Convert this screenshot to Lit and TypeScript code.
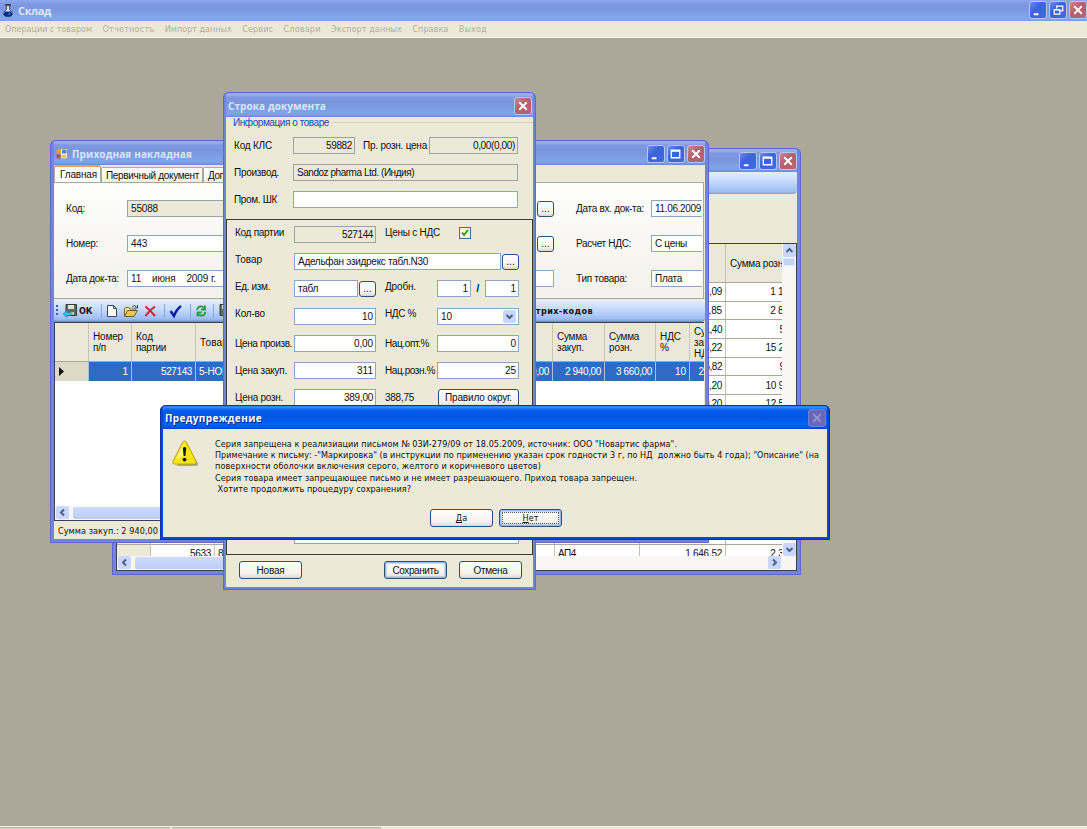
import { css, html, LitElement, svg } from "lit";
import { customElement, property } from "lit/decorators.js";
import { classMap } from "lit/directives/class-map.js";

/** A run of text whose tracking is adjusted so that it fills a given width. */
@customElement("xp-text")
export class XpText extends LitElement {
  static styles = css`
    :host {
      display: inline-block;
      white-space: pre;
      flex: none;
    }
  `;

  @property() text = "";
  @property({ type: Number }) w = 0;

  protected override render() {
    return html`<span>${this.text}</span>`;
  }

  protected override updated(): void {
    const span = this.renderRoot.querySelector("span");
    if (!span || !this.w || !this.text) {
      return;
    }
    span.style.letterSpacing = "0";
    const natural = span.getBoundingClientRect().width;
    span.style.letterSpacing = `${(this.w - natural) / this.text.length}px`;
  }
}

const t = (text: string, w = 0) => html`<xp-text .text=${text} .w=${w}></xp-text>`;

const amount = (text: string) => t(text, text.length * 4.6);

type Caption = "min" | "max" | "restore" | "close";

const captionGlyphs = {
  min: svg`<path d="M4 12h5v2H4z" fill="#fff" />`,
  max: svg`<path d="M3.500 4.500h9v8h-9z M3 5.500h10" fill="none" stroke="#fff" stroke-width="1.400" />`,
  restore: svg`<path d="M7 7V4.500h6.500v5H11 M4.500 8h6v5h-6z M4 8.500h7" fill="none" stroke="#fff" stroke-width="1.300" />`,
  close: svg`<path d="M4.500 4.500l8 8M12.500 4.500l-8 8" fill="none" stroke="#fff" stroke-width="2" />`
};

@customElement("xp-window")
export class XpWindow extends LitElement {
  static styles = css`
    :host {
      box-sizing: border-box;
      display: flex;
      flex-direction: column;
      background: #ece9d8;
      border: solid #7384dc;
      border-width: 0 var(--edge, 4px) var(--edge, 4px);
      border-radius: 6px 6px 0 0;
      outline: 1px solid #6266cc;
      outline-offset: -1px;
      overflow: hidden;
    }

    :host([active]) {
      border-color: #0b45dc;
      outline-color: #0a2fb4;
    }

    .bar {
      box-sizing: border-box;
      flex: none;
      display: flex;
      align-items: center;
      gap: 2px;
      height: var(--bar, 24px);
      margin: 0 calc(0px - var(--edge, 4px));
      padding: 2px 4px 0 5px;
      background: linear-gradient(#7482d8, #a0b6ee 8%, #8099e2 20%, #7a95df 45%, #80a3e8 82%, #7f9fe6 90%, #6f86d8);
      color: #dbe5fa;
      font: bold 10px "Open Sans", sans-serif;
    }

    :host([active]) .bar {
      background: linear-gradient(#0a3fcc, #3d95ff 8%, #0a5ff0 20%, #0054e3 45%, #0064fa 80%, #0058ea 92%, #0042c4);
      color: #fff;
      text-shadow: 1px 1px #0a1883;
    }

    .name {
      flex: 1;
      display: flex;
      align-items: center;
      gap: 4px;
    }

    svg {
      box-sizing: border-box;
      width: 18px;
      height: 18px;
      border: 1px solid #b5c6f2;
      border-radius: 3px;
      background: linear-gradient(135deg, #6d8bea, #3c62da 40%, #3f6be4);
    }

    svg.close {
      background: linear-gradient(135deg, #c98a94, #b4606c 45%, #b9646e);
    }

    :host([active]) svg.close {
      border-color: #7d88d8;
      background: #7c6aae;
      opacity: 0.85;
    }

    :host([active]) svg.close path {
      stroke: #a8a0cc;
    }

    .body {
      flex: 1;
      display: flex;
      flex-direction: column;
      min-height: 0;
    }
  `;

  @property() name = "";
  @property({ type: Number }) nameWidth = 0;
  @property({ attribute: false }) buttons: Caption[] = ["close"];

  protected override render() {
    return html`
      <div class="bar">
        <div class="name"><slot name="icon"></slot>${t(this.name, this.nameWidth)}</div>
        ${this.buttons.map((b) => html`<svg class=${b} viewBox="0 0 17 17">${captionGlyphs[b]}</svg>`)}
      </div>
      <div class="body"><slot></slot></div>
    `;
  }
}

const MENU: [string, number][] = [
  ["Операции с товаром", 87],
  ["Отчетность", 52],
  ["Импорт данных", 67],
  ["Сервис", 31],
  ["Словари", 37],
  ["Экспорт данных", 71],
  ["Справка", 36],
  ["Выход", 28]
];

const JOURNAL_ROWS: [string, string][] = [
  ["1 646,09", "1 146,10"],
  ["2 311,85", "2 842,40"],
  ["431,40", "530,60"],
  ["12 684,22", "15 221,00"],
  ["785,82", "966,50"],
  ["9 096,20", "10 915,40"],
  ["10 410,20", "12 544,00"]
];

const MESSAGE: [string, number][] = [
  ['Серия запрещена к реализиации письмом № 03И-279/09 от 18.05.2009, источник: ООО "Новартис фарма".', 462],
  ['Примечание к письму: -"Маркировка" (в инструкции по применению указан срок годности 3 г, по НД  должно быть 4 года); "Описание" (на', 604],
  ["поверхности оболочки включения серого, желтого и коричневого цветов)", 326],
  ["Серия товара имеет запрещающее письмо и не имеет разрешающего. Приход товара запрещен.", 422],
  [" Хотите продолжить процедуру сохранения?", 196]
];

const floppy = (withArrow: boolean) => html`<svg class="i14" viewBox="0 0 14 14">
  <path d="M3 .5h10.500v11H3z" fill="#5d6f5a" stroke="#2f3b33" />
  <path d="M5 1h6v4H5z" fill="#dfe4dc" /><path d="M6 8h5v3H6z" fill="#b8c2b5" />
  ${withArrow
    ? svg`<path d="M0 10l4-3.500v2h4v3H4v2z" fill="#2fc4dc" stroke="#1480a0" stroke-width=".6" />`
    : ""}
</svg>`;

const flask = html`<svg class="flask" viewBox="0 0 11 15">
  <path d="M3 1h5v1.500H7V6l3 4v2.500L8 14H3L1 12.500V10l3-4V2.500H3z" fill="#dfe8f4" stroke="#222a50" stroke-width=".8" />
  <path d="M2.500 8.500h6l1.500 2v2L8 14H3l-2-1.500v-2z" fill="#0b2c8c" />
  <path d="M3 .6h5v1.600H3z" fill="#2d2620" /><path d="M6 10h2v2H6z" fill="#3b7ae0" />
</svg>`;

const formIcon = html`<svg slot="icon" class="form-icon" viewBox="0 0 12 12">
  <path d="M4.500 .5h7v8h-7z" fill="#f3f5f8" stroke="#8d929c" />
  <path d="M.5 1.500h4.500v4H.5z" fill="#f0a028" /><path d="M6 1.500h4.500v4H6z" fill="#5a80dc" />
  <path d="M.5 6.500h4v4h-4z" fill="#d8482c" />
  <path d="M5.500 6.500h5v3.500h-5z" fill="#f3c22e" stroke="#fff" stroke-width=".6" />
</svg>`;

const warning = html`<svg class="warning" viewBox="0 0 28 28">
  <path d="M14.500 4.500L27 25q.5 2-1.500 2.500H5z" fill="#8c8a78" opacity=".7" />
  <path d="M13 1.500q-1.300 0-2 1.400L1 22.700q-.9 2.600 1.500 2.800h21q2.400-.2 1.500-2.800L15 2.900q-.7-1.400-2-1.400z" fill="#f9e418" stroke="#b89c10" />
  <path d="M12.800 3.500L4 21l8-5z" fill="#fff78c" />
  <path d="M11.200 8.500q1.800-1.500 3.600 0l-.9 8.500h-1.800z" fill="#151515" /><circle cx="13" cy="20.800" r="2" fill="#151515" />
</svg>`;

const arrow = (dir: "up" | "down" | "left" | "right") => html`
  <svg class="arrow ${dir}" viewBox="0 0 13 13"><path d="M3.500 8L6.500 5l3 3" fill="none" stroke="#4d6185" stroke-width="2" /></svg>
`;

const box = (text: string, w: number, cls: string) => html`<div class="box ${cls}">${t(text, w)}</div>`;

const dots = html`<button class="dots">...</button>`;

@customElement("app-root")
export class AppRoot extends LitElement {
  static styles = css`
    :host {
      position: relative;
      display: flex;
      flex-direction: column;
      width: 1087px;
      height: 829px;
      overflow: hidden;
      background: #aca899;
      color: #111;
      font: 10px "Liberation Sans", Arial, sans-serif;
      --tahoma: "DejaVu Sans Condensed", "DejaVu Sans", sans-serif;
    }

    * {
      box-sizing: border-box;
    }

    .titlebar {
      flex: none;
      display: flex;
      align-items: center;
      gap: 2px;
      height: 21px;
      padding: 0 0 1px 3px;
      background: linear-gradient(#8ea9ea, #7b97e0 22%, #7b98e1 50%, #82a9ec 85%, #7c9fe4);
      color: #dfe8fb;
      font: bold 11px "Open Sans", sans-serif;
    }

    .titlebar .name {
      flex: 1;
      padding-left: 3px;
    }

    .flask {
      width: 10px;
      height: 15px;
    }

    .cap {
      width: 18px;
      height: 18px;
      border: 1px solid #b5c6f2;
      border-radius: 3px;
      background: linear-gradient(135deg, #6d8bea, #3c62da 40%, #3f6be4);
    }

    .cap.close {
      background: linear-gradient(135deg, #c98a94, #b4606c 45%, #b9646e);
    }

    .menu {
      flex: none;
      display: flex;
      align-items: center;
      gap: 10.400px;
      height: 17px;
      padding-left: 5px;
      border-bottom: 1px solid #f8f6ee;
      background: #ece9d8;
      color: #b3af9f;
      font: 9px var(--tahoma);
    }

    .desktop {
      flex: 1;
    }

    .status {
      flex: none;
      display: grid;
      grid-template-columns: 170px 209px 1fr;
      gap: 2px;
      height: 3px;
      border-top: 1px solid #f4f1e4;
      background: #ece9d8;
    }

    .status i {
      border-top: 1px solid #b9b5a4;
      background: #d6d2c2;
    }

    .status i:last-child {
      border-color: #ece9d8;
      background: #ece9d8;
    }

    xp-window {
      position: absolute;
    }

    .journal {
      left: 112px;
      top: 148px;
      width: 689px;
      height: 427px;
    }

    .invoice {
      left: 50px;
      top: 140px;
      width: 659px;
      height: 403px;
      --bar: 25px;
    }

    .line {
      left: 223px;
      top: 92px;
      width: 313px;
      height: 498px;
      --bar: 25px;
      --edge: 3px;
    }

    .alert {
      left: 160px;
      top: 405px;
      width: 670px;
      height: 135px;
      --bar: 24px;
      --edge: 3px;
    }

    .strip {
      flex: none;
      display: flex;
      align-items: center;
      background: linear-gradient(#e4eefd, #c4d9fb 45%, #9dbdf3 90%, #7d9fdc);
      border-radius: 0 0 4px 0;
    }

    .journal .strip {
      height: 22px;
    }

    .journal .space {
      height: 49px;
    }

    .journal-grid {
      flex: 1;
      display: grid;
      grid-template: minmax(0, 1fr) 14px / minmax(0, 1fr) 14px;
      border: 1px solid #3b3f52;
      background: #f6f5ef;
      overflow: hidden;
    }

    .sheet {
      display: flex;
      flex-direction: column;
      overflow: hidden;
      background: #fff;
    }

    .jr {
      flex: none;
      display: grid;
      grid-template-columns: 34px 64px 340px 85px 86px 85px;
      height: 18.700px;
      border-bottom: 1px solid #aca899;
    }

    .jr > * {
      display: flex;
      align-items: center;
      justify-content: flex-end;
      padding: 0 3px;
      border-right: 1px solid #c3c0b2;
    }

    .jr > :first-child {
      background: #ece9d8;
    }

    .jr > .start {
      justify-content: flex-start;
    }

    .jr.head {
      height: 39px;
      background: #ebe8d9;
    }

    .jr.head > .start {
      padding-left: 4px;
    }

    .vscroll,
    .hscroll {
      display: flex;
      justify-content: space-between;
      background: #f8f7f3;
    }

    .vscroll {
      flex-direction: column;
    }

    .vscroll .thumb {
      height: 8px;
      margin: 1px 1px auto;
      border: 1px solid #dce6fd;
      border-radius: 2px;
      background: #c2d3fb;
    }

    .hscroll .thumb {
      flex: 1;
      margin: 1px 0 1px 3px;
      border-radius: 2px;
      background: linear-gradient(#cddbfe, #bccdf9);
    }

    .journal .hscroll .thumb {
      flex: none;
      width: 300px;
      margin-right: auto;
    }

    .arrow {
      flex: none;
      width: 13px;
      height: 13px;
      margin: 0 1px;
      border-radius: 2px;
      background: #c8d7fb;
    }

    .left {
      transform: rotate(-90deg);
    }

    .right {
      transform: rotate(90deg);
    }

    .down {
      transform: rotate(180deg);
    }

    .tabs {
      display: flex;
      align-items: flex-end;
      height: 17px;
    }

    .tab {
      display: flex;
      align-items: center;
      height: 15px;
      padding: 0 3px 0 4px;
      border: 1px solid #a7a999;
      border-bottom: 0;
      border-radius: 2px 2px 0 0;
      background: linear-gradient(#fff, #f0efe6);
    }

    .tab.on {
      height: 17px;
      padding-left: 5px;
      border-top: 2px solid #f0a24a;
      background: #fdfdfb;
    }

    .page {
      display: flex;
      flex-direction: column;
      gap: 18px;
      height: 117px;
      margin-right: 1px;
      padding: 17px 0 0 12px;
      border: 1px solid #a9a999;
      border-left: 0;
      background: linear-gradient(#fdfdfc, #f2f1ea);
      overflow: hidden;
    }

    .frow {
      flex: none;
      display: flex;
      align-items: center;
      height: 17px;
      width: 636px;
      overflow: hidden;
    }

    .frow > xp-text {
      width: 61px;
      padding-bottom: 1px;
    }

    .frow > xp-text.second {
      width: 75px;
      margin-left: 22px;
    }

    .box {
      flex: none;
      display: flex;
      align-items: center;
      height: 17px;
      padding: 0 3px;
      border: 1px solid #8ba5c3;
      background: #fff;
    }

    .box.end {
      justify-content: flex-end;
      padding-right: 2px;
    }

    .box.ro {
      background: #ece9d8;
      border-color: #9aa4a8;
    }

    .wide {
      width: 407px;
      margin-right: 3px;
    }

    .wider {
      width: 427px;
    }

    .tail {
      width: 60px;
    }

    .dots,
    .btn {
      flex: none;
      border: 1px solid #2c5076;
      border-radius: 3px;
      background: linear-gradient(#fff, #f3f2ea 75%, #dcd8cc);
      color: #111;
      font: inherit;
    }

    .dots {
      width: 17px;
      height: 16px;
      padding: 0;
      line-height: 11px;
    }

    .btn {
      display: flex;
      align-items: center;
      justify-content: center;
      width: 63px;
      height: 18px;
      padding: 0;
    }

    .btn.default {
      box-shadow: inset 0 0 0 1.500px #9bb9ec;
    }

    .toolbar {
      height: 22px;
      margin-top: 1px;
      padding-left: 2px;
      font: bold 9px var(--tahoma);
      border-bottom: 1px solid #6d8fce;
    }

    .toolbar svg {
      flex: none;
      height: 14px;
    }

    .i14 {
      width: 14px;
    }

    .grip {
      width: 2px;
      height: 12px;
      margin-right: 5px;
      background: repeating-linear-gradient(#3f5f9f 0 2px, transparent 2px 4px);
    }

    .ok {
      margin-left: 2px;
    }

    .toolbar .codes {
      margin-left: 257px;
    }

    .lines {
      display: flex;
      flex-direction: column;
      height: 199px;
      margin-right: 1px;
      border: 1px solid #3b3f52;
      border-right: 0;
      background: #fff;
      overflow: hidden;
    }

    .lr {
      flex: none;
      display: grid;
      grid-template-columns: 34px 43px 64px 357px 52px 51px 34px 60px;
      height: 19px;
      background: #316ac5;
      color: #fff;
    }

    .lr > * {
      display: flex;
      align-items: center;
      justify-content: flex-end;
      padding: 0 3px;
      border-right: 1px solid #a9bde0;
      white-space: nowrap;
    }

    .lr > .start {
      justify-content: flex-start;
    }

    .lr > .mark {
      justify-content: flex-start;
      background: #ddd9c8;
    }

    .lr.head {
      height: 39px;
      background: #ebe8d9;
      border-bottom: 1px solid #aca899;
      color: #111;
    }

    .lr.head > * {
      flex-direction: column;
      align-items: flex-start;
      justify-content: center;
      padding-left: 4px;
      border-color: #c8c5b5;
      line-height: 11px;
    }

    .lr > .split {
      justify-content: space-between;
    }

    .lines .hscroll {
      margin-top: auto;
      height: 14px;
    }

    .sum {
      display: flex;
      align-items: center;
      flex: 1;
      padding: 2px 4px 0;
      font: 9px var(--tahoma);
    }

    .group {
      display: flex;
      flex-direction: column;
      height: 102px;
      padding: 0 0 0 8px;
      gap: 10px;
    }

    .legend {
      display: flex;
      align-items: center;
      gap: 3px;
      height: 10px;
      margin-left: -1px;
      color: #1048c0;
    }

    .legend::after {
      content: "";
      flex: 1;
      height: 1px;
      background: #d3d4c0;
    }

    .card {
      display: flex;
      flex-direction: column;
      gap: 10.200px;
      height: 336px;
      padding: 6px 0 0 8px;
      border: 1px solid #3b3b3b;
    }

    .row {
      flex: none;
      display: flex;
      height: 17px;
      align-items: center;
    }

    .row > xp-text {
      width: 59px;
    }

    .card .row > xp-text {
      padding-bottom: 5px;
    }

    .card .row.low > xp-text {
      padding-bottom: 0;
    }

    .card .row > xp-text.mid {
      width: 52px;
      margin-left: 9px;
    }

    .row > xp-text.mid {
      width: 66px;
      margin-left: 8px;
    }

    .w62 {
      width: 62px;
    }

    .w89 {
      width: 89px;
    }

    .w225 {
      width: 225px;
    }

    .w82 {
      width: 82px;
    }

    .w207 {
      width: 207px;
      margin-right: 1px;
    }

    .w64 {
      width: 64px;
      margin-right: 1px;
    }

    .w34 {
      width: 34px;
    }

    .check {
      width: 12px;
      height: 12px;
      margin: 0 0 4px 22px;
      border: 1px solid #3f6e90;
      background: #f2f6ee;
    }

    .slash {
      width: 14px;
      text-align: center;
      font-weight: bold;
    }

    .select {
      justify-content: space-between;
      padding-right: 1px;
    }

    .rule {
      width: 81px;
      margin-left: 1px;
    }

    .last {
      margin-top: auto;
      margin-bottom: 10px;
      padding-left: 59px;
    }

    .buttons {
      display: flex;
      padding: 6px 0 0 13px;
    }

    .save {
      margin: 0 12px 0 82px;
    }

    .message {
      display: flex;
      gap: 16px;
      height: 80px;
      padding: 10px 0 0 9px;
      font: 9px/11.200px var(--tahoma);
    }

    .message .text {
      display: flex;
      flex-direction: column;
    }

    .warning {
      width: 27px;
      height: 28px;
    }

    .answers {
      display: flex;
      gap: 6px;
      padding-left: 267px;
      font: 9px var(--tahoma);
    }

    .focus {
      outline: 1px dotted #555;
      outline-offset: -4px;
      box-shadow: inset 0 0 0 1.500px #9bb9ec;
    }

    .form-icon {
      width: 12px;
      height: 12px;
      margin-left: 1px;
    }
  `;

  protected override render() {
    return html`
      <header class="titlebar">
        ${flask}
        <div class="name">${t("Склад", 33)}</div>
        ${(["min", "restore", "close"] as Caption[]).map(
          (b) => html`<svg class=${classMap({ cap: true, close: b === "close" })} viewBox="0 0 17 17">${captionGlyphs[b]}</svg>`
        )}
      </header>
      <nav class="menu">${MENU.map(([label, w]) => t(label, w))}</nav>
      <main class="desktop">
        ${this.renderJournal()} ${this.renderInvoice()} ${this.renderLine()} ${this.renderAlert()}
      </main>
      <footer class="status"><i></i><i></i><i></i></footer>
    `;
  }

  private renderJournal() {
    return html`
      <xp-window class="journal" .buttons=${["min", "max", "close"]}>
        <div class="strip"></div>
        <div class="space"></div>
        <div class="journal-grid">
          <div class="sheet">
            <div class="jr head">
              <div></div><div></div><div></div><div></div><div></div>
              <div class="start">${t("Сумма розн", 53)}</div>
            </div>
            ${JOURNAL_ROWS.map(
              ([buy, sell]) => html`
                <div class="jr">
                  <div></div><div></div><div></div><div></div>
                  <div>${amount(buy)}</div>
                  <div>${amount(sell)}</div>
                </div>
              `
            )}
            ${Array.from({ length: 7 }, () => html`
              <div class="jr"><div></div><div></div><div></div><div></div><div></div><div></div></div>
            `)}
            <div class="jr">
              <div></div>
              <div>${t("5633", 21)}</div>
              <div class="start">8</div>
              <div class="start">${t("АП4", 18)}</div>
              <div>${amount("1 646,52")}</div>
              <div>${amount("2 311,20")}</div>
            </div>
          </div>
          <div class="vscroll">${arrow("up")}<div class="thumb"></div>${arrow("down")}</div>
          <div class="hscroll">${arrow("left")}<div class="thumb"></div>${arrow("right")}</div>
        </div>
      </xp-window>
    `;
  }

  private renderInvoice() {
    return html`
      <xp-window class="invoice" name="Приходная накладная" .nameWidth=${120} .buttons=${["min", "max", "close"]}>
        ${formIcon}
        <div class="tabs">
          <div class="tab on">${t("Главная", 37)}</div>
          <div class="tab">${t("Первичный документ", 93)}</div>
          <div class="tab">${t("Дополнительно", 66)}</div>
        </div>
        <div class="page">
          <div class="frow">
            ${t("Код:", 19)} ${box("55088", 27, "wide ro")} ${dots}
            <xp-text class="second" .text=${"Дата вх. док-та:"} .w=${68}></xp-text>
            ${box("11.06.2009", 46, "tail")}
          </div>
          <div class="frow">
            ${t("Номер:", 32)} ${box("443", 16, "wide")} ${dots}
            <xp-text class="second" .text=${"Расчет НДС:"} .w=${55}></xp-text>
            ${box("С цены", 32, "tail")}
          </div>
          <div class="frow">
            ${t("Дата док-та:", 53)} ${box("11    июня    2009 г.", 85, "wider")}
            <xp-text class="second" .text=${"Тип товара:"} .w=${51}></xp-text>
            ${box("Плата", 27, "tail")}
          </div>
        </div>
        <div class="strip toolbar">
          <i class="grip"></i>${floppy(true)}<span class="ok">${t("ОК", 13)}</span>
          ${this.renderTools()}
          <span class="codes">${t("Печать штрих-кодов", 105)}</span>
        </div>
        <div class="lines">
          <div class="lr head">
            <div></div>
            <div>${t("Номер", 30)}${t("п/п", 13)}</div>
            <div>${t("Код", 17)}${t("партии", 30)}</div>
            <div>${t("Товар", 28)}</div>
            <div>${t("Сумма", 30)}${t("закуп.", 27)}</div>
            <div>${t("Сумма", 30)}${t("розн.", 23)}</div>
            <div>${t("НДС", 21)}${t("%", 7)}</div>
            <div>${t("Сумма", 30)}${t("закуп.", 27)}${t("НДС", 21)}</div>
          </div>
          <div class="lr">
            <div class="mark"><svg width="8" height="9" viewBox="0 0 8 9"><path d="M1 0l5 4.500-5 4.500z" fill="#111" /></svg></div>
            <div>1</div>
            <div>${t("527143", 31)}</div>
            <div class="split">${t("5-НОК табл.", 54)}${t("2 940,00", 36)}</div>
            <div>${t("2 940,00", 36)}</div>
            <div>${t("3 660,00", 36)}</div>
            <div>10</div>
            <div class="start">&nbsp;&nbsp;267,27</div>
          </div>
          <div class="hscroll">${arrow("left")}<div class="thumb"></div>${arrow("right")}</div>
        </div>
        <div class="sum">${t("Сумма закуп.: 2 940,00", 100)}</div>
      </xp-window>
    `;
  }

  private renderTools() {
    return html`
      <svg width="125" viewBox="0 0 125 14">
        <path d="M9.500 0v14M72.500 0v14M98.500 0v14M121.500 0v14" stroke="#8ba9dc" />
        <path d="M15.500 1.500h6l3 3v8h-9z" fill="#fff" stroke="#3d4552" />
        <path d="M21.500 1.500v3h3" fill="none" stroke="#3d4552" />
        <path d="M32.500 12V4.500l1.500-1h3l1 1.500h5V7" fill="#f4e39a" stroke="#7d6a1c" />
        <path d="M32.500 12.500l3-6h10l-3.500 6z" fill="#e8c84c" stroke="#6f5e18" />
        <path d="M40 3q2.500-3 4.500 0M45.500 1v3h-3" fill="none" stroke="#2f4a3a" />
        <path d="M53.500 2.500q5 4 9.500 9.500M63 2.500q-6 4-9.500 9.500" fill="none" stroke="#d0222c" stroke-width="2" />
        <path d="M78.500 7l3.500 5q2-6 7-10" fill="none" stroke="#0c1fa8" stroke-width="2.400" />
        <path d="M105 6q1-4 5-3.500l2 1M113 1.500v4h-4M113.500 8q-1 4-5 3.500l-2-1M105.500 12.500v-4h4" fill="none" stroke="#27963a" stroke-width="1.800" />
      </svg>
      ${floppy(false)}
    `;
  }

  private renderLine() {
    const pair = (
      label: [string, number],
      value: [string, number],
      midLabel: [string, number],
      last: unknown,
      low = false
    ) => html`
      <div class=${classMap({ row: true, low })}>
        ${t(...label)} ${box(value[0], value[1], "w82 end")}
        <xp-text class="mid" .text=${midLabel[0]} .w=${midLabel[1]}></xp-text>
        ${last}
      </div>
    `;

    return html`
      <xp-window class="line" name="Строка документа" .nameWidth=${98}>
        <div class="group">
          <div class="legend">${t("Информация о товаре", 96)}</div>
          <div class="row">
            ${t("Код КЛС", 38)} ${box("59882", 26, "w62 ro end")}
            <xp-text class="mid" .text=${"Пр. розн. цена"} .w=${64}></xp-text>
            ${box("0,00(0,00)", 42, "w89 ro end")}
          </div>
          <div class="row">${t("Производ.", 45)} ${box("Sandoz pharma Ltd. (Индия)", 117, "w225 ro")}</div>
          <div class="row">${t("Пром. ШК", 43)} ${box("", 0, "w225")}</div>
        </div>
        <div class="card">
          <div class="row">
            ${t("Код партии", 49)} ${box("527144", 31, "w82 ro end")}
            <xp-text class="mid" .text=${"Цены с НДС"} .w=${55}></xp-text>
            <svg class="check" viewBox="0 0 10 10"><path d="M2 4.500l2 2.500 4-5" fill="none" stroke="#22a022" stroke-width="2" /></svg>
          </div>
          <div class="row">${t("Товар", 27)} ${box("Адельфан эзидрекс табл.N30", 130, "w207")} ${dots}</div>
          <div class="row">
            ${t("Ед. изм.", 35)} ${box("табл", 20, "w64")} ${dots}
            <xp-text class="mid" .text=${"Дробн."} .w=${31}></xp-text>
            ${box("1", 0, "w34 end")}<span class="slash">/</span>${box("1", 0, "w34 end")}
          </div>
          ${pair(["Кол-во", 30], ["10", 11], ["НДС %", 31], html`<div class="box w82 select">10${arrow("down")}</div>`)}
          ${pair(["Цена произв.", 57], ["0,00", 19], ["Нац.опт.%", 44], box("0", 0, "w82 end"), true)}
          ${pair(["Цена закуп.", 52], ["311", 16], ["Нац.розн.%", 50], box("25", 11, "w82 end"), true)}
          ${pair(
            ["Цена розн.", 48],
            ["389,00", 29],
            ["388,75", 29],
            html`<button class="btn rule">${t("Правило округ.", 67)}</button>`,
            true
          )}
          <div class="row last">${box("", 0, "w225")}</div>
        </div>
        <div class="buttons">
          <button class="btn">${t("Новая", 28)}</button>
          <button class="btn default save">${t("Сохранить", 46)}</button>
          <button class="btn">${t("Отмена", 34)}</button>
        </div>
      </xp-window>
    `;
  }

  private renderAlert() {
    return html`
      <xp-window class="alert" active name="Предупреждение" .nameWidth=${97}>
        <div class="message">
          ${warning}
          <div class="text">${MESSAGE.map(([line, w]) => t(line, w))}</div>
        </div>
        <div class="answers">
          <button class="btn"><span><u>Д</u>а</span></button>
          <button class="btn focus"><span><u>Н</u>ет</span></button>
        </div>
      </xp-window>
    `;
  }
}
